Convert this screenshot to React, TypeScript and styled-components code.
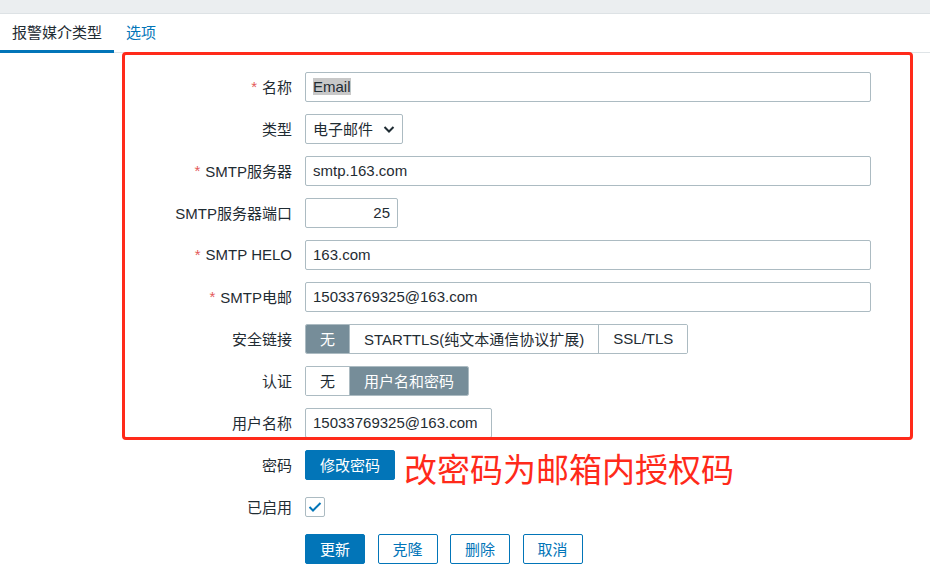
import styled, { createGlobalStyle } from "styled-components";

const GlobalStyle = createGlobalStyle`
  body {
    margin: 0;
    background: #ffffff;
    font-family: "Liberation Sans", Arial, "Noto Sans CJK SC", sans-serif;
    color: #1f2c33;
  }
`;

const Page = styled.div`
  position: relative;
  width: 930px;
  height: 573px;
  overflow: hidden;
`;
const TopStrip = styled.div`
  height: 13px;
  background: #ebeef0;
  border-bottom: 1px solid #dde2e5;
`;
const TabBar = styled.div`
  display: flex;
  height: 38px;
  border-bottom: 1px solid #dfe4e7;
`;
const Tab = styled.div<{ $active?: boolean }>`
  display: flex;
  align-items: center;
  padding: 0 12px 1px;
  font-size: 15px;
  margin-bottom: -1px;
  color: ${(p) => (p.$active ? "#1f2c33" : "#0275b8")};
  border-bottom: 3px solid ${(p) => (p.$active ? "#0275b8" : "transparent")};
`;
const Form = styled.div`
  display: grid;
  grid-template-columns: 292px 1fr;
  column-gap: 13px;
  row-gap: 12px;
  grid-auto-rows: 30px;
  padding-top: 19px;
`;
const Label = styled.div`
  display: flex;
  align-items: center;
  justify-content: flex-end;
  font-size: 15px;
  white-space: nowrap;
  padding-bottom: 1px;
`;
const Star = styled.span`
  color: #e45959;
  margin-right: 5px;
`;
const Cell = styled.div`
  display: flex;
  align-items: center;
`;
const Field = styled.div<{ $width: number; $right?: boolean }>`
  box-sizing: border-box;
  width: ${(p) => p.$width}px;
  height: 30px;
  border: 1px solid #acbbc2;
  border-radius: 2px;
  display: flex;
  align-items: center;
  justify-content: ${(p) => (p.$right ? "flex-end" : "flex-start")};
  padding: 0 7px 1px;
  font-size: 15px;
  background: #fff;
`;
const Selected = styled.span`
  background: #c8c8c8;
`;
const Select = styled(Field)`
  justify-content: space-between;
  padding: 0 6px 1px 7px;
`;
const Segments = styled.div`
  display: flex;
  height: 30px;
  border: 1px solid #acbbc2;
  border-radius: 2px;
  box-sizing: border-box;
  overflow: hidden;
`;
const Segment = styled.div<{ $on?: boolean }>`
  display: flex;
  align-items: center;
  padding: 0 14px 1px;
  font-size: 15px;
  white-space: nowrap;
  background: ${(p) => (p.$on ? "#768d99" : "#fff")};
  color: ${(p) => (p.$on ? "#fff" : "#1f2c33")};
  & + & {
    border-left: 1px solid #acbbc2;
  }
`;
const Button = styled.div<{ $primary?: boolean; $width: number }>`
  box-sizing: border-box;
  width: ${(p) => p.$width}px;
  height: 30px;
  display: flex;
  align-items: center;
  justify-content: center;
  padding-bottom: 1px;
  font-size: 15px;
  border-radius: 2px;
  border: 1px solid #0275b8;
  background: ${(p) => (p.$primary ? "#0275b8" : "#fff")};
  color: ${(p) => (p.$primary ? "#fff" : "#0275b8")};
`;
const ButtonRow = styled.div`
  display: flex;
  align-items: center;
  gap: 12.5px;
`;
const Checkbox = styled.div`
  box-sizing: border-box;
  width: 20px;
  height: 20px;
  border: 1px solid #acbbc2;
  border-radius: 2px;
  display: flex;
  align-items: center;
  justify-content: center;
`;
const Note = styled.span`
  margin-left: 9px;
  font-size: 33px;
  color: #ff2a1a;
  white-space: nowrap;
  font-family: "Noto Sans CJK SC", sans-serif;
  line-height: 1;
  margin-top: 6px;
`;
const RedFrame = styled.div`
  position: absolute;
  left: 122px;
  top: 52px;
  width: 791px;
  height: 388px;
  box-sizing: border-box;
  border: 3px solid #ff2a1a;
  border-radius: 4px;
  pointer-events: none;
`;

const Chevron = () => (
  <svg width="14" height="14" viewBox="0 0 14 14">
    <path d="M2.5 5l4.5 4.5L11.5 5" fill="none" stroke="#1f2c33" strokeWidth="2" />
  </svg>
);

const Check = () => (
  <svg width="14" height="12" viewBox="0 0 14 12">
    <path d="M1.5 6l3.5 3.5L12.5 2" fill="none" stroke="#0275b8" strokeWidth="2" />
  </svg>
);

const Req = ({ children }: { children: string }) => (
  <Label>
    <Star>*</Star>
    {children}
  </Label>
);

const App = () => {
  return (
    <Page>
      <GlobalStyle />
      <TopStrip />
      <TabBar>
        <Tab $active>报警媒介类型</Tab>
        <Tab>选项</Tab>
      </TabBar>
      <Form>
        <Req>名称</Req>
        <Cell>
          <Field $width={566}>
            <Selected>Email</Selected>
          </Field>
        </Cell>

        <Label>类型</Label>
        <Cell>
          <Select $width={98}>
            电子邮件
            <Chevron />
          </Select>
        </Cell>

        <Req>SMTP服务器</Req>
        <Cell>
          <Field $width={566}>smtp.163.com</Field>
        </Cell>

        <Label>SMTP服务器端口</Label>
        <Cell>
          <Field $width={93} $right>
            25
          </Field>
        </Cell>

        <Req>SMTP HELO</Req>
        <Cell>
          <Field $width={566}>163.com</Field>
        </Cell>

        <Req>SMTP电邮</Req>
        <Cell>
          <Field $width={566}>15033769325@163.com</Field>
        </Cell>

        <Label>安全链接</Label>
        <Cell>
          <Segments>
            <Segment $on>无</Segment>
            <Segment>STARTTLS(纯文本通信协议扩展)</Segment>
            <Segment>SSL/TLS</Segment>
          </Segments>
        </Cell>

        <Label>认证</Label>
        <Cell>
          <Segments>
            <Segment>无</Segment>
            <Segment $on>用户名和密码</Segment>
          </Segments>
        </Cell>

        <Label>用户名称</Label>
        <Cell>
          <Field $width={187}>15033769325@163.com</Field>
        </Cell>

        <Label>密码</Label>
        <Cell>
          <Button $primary $width={90}>
            修改密码
          </Button>
          <Note>改密码为邮箱内授权码</Note>
        </Cell>

        <Label>已启用</Label>
        <Cell>
          <Checkbox>
            <Check />
          </Checkbox>
        </Cell>

        <div />
        <ButtonRow>
          <Button $primary $width={60}>
            更新
          </Button>
          <Button $width={60}>克隆</Button>
          <Button $width={60}>删除</Button>
          <Button $width={60}>取消</Button>
        </ButtonRow>
      </Form>
      <RedFrame />
    </Page>
  );
};

export default App;
